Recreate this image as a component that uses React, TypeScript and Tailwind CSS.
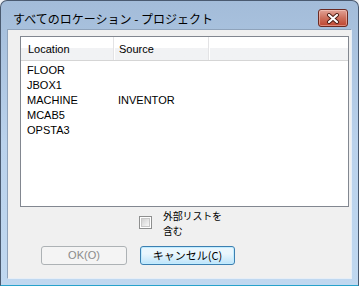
import React from "react";

const rows: [string, string][] = [
  ["FLOOR", ""],
  ["JBOX1", ""],
  ["MACHINE", "INVENTOR"],
  ["MCAB5", ""],
  ["OPSTA3", ""],
];

const ui = { fontFamily: '"Liberation Sans", "Noto Sans CJK JP", sans-serif' };
const jp = { fontFamily: '"Noto Sans CJK JP", "Liberation Sans", sans-serif' };

export default function App() {
  return (
    <div className="w-[359px] h-[286px] bg-[#eef1f5] overflow-hidden">
      <div className="w-[359px] h-[286px] flex flex-col rounded-t-[7px] border border-[#4a5a70] border-b-[#27a2cb] bg-gradient-to-b from-[#a3bcd9] via-[#bad2ec] to-[#c0d8f0]">
        {/* title bar */}
        <div className="h-[28px] flex justify-between shrink-0">
          <div className="pl-[12px] pt-[12px] text-[12px] leading-[12px] text-black whitespace-nowrap" style={jp}>
            すべてのロケーション - プロジェクト
          </div>
          <div className="mt-[8px] mr-[10px] w-[30px] h-[18px] rounded-[3px] border border-[#6b2a22] bg-gradient-to-b from-[#e2a397] via-[#cc6f5c] to-[#bf4530] flex items-center justify-center shadow-[inset_0_0_0_1px_rgba(255,220,210,0.45)]">
            <svg width="14" height="11" viewBox="0 0 14 11">
              <path d="M3 2 L11 9 M11 2 L3 9" stroke="#4a1a12" strokeWidth="4" strokeLinecap="round" />
              <path d="M3 2 L11 9 M11 2 L3 9" stroke="#ffffff" strokeWidth="2.2" strokeLinecap="round" />
            </svg>
          </div>
        </div>
        {/* client area */}
        <div className="mx-[6px] h-[250px] border border-[#8fa3bb] border-r-[#e6eef7] border-b-[#e6eef7] bg-[#f0f0f0] flex flex-col" style={ui}>
          {/* list */}
          <div className="ml-[12px] mt-[6px] w-[329px] h-[171px] border border-[#828790] bg-white flex flex-col">
            <div className="h-[24px] flex border-b border-[#d5d5d5] bg-gradient-to-b from-white from-50% to-[#f1f2f4] to-50% text-[11px] text-black">
              <div className="w-[92px] pl-[7px] pt-[2px] flex items-center">Location</div>
              <div className="w-[1px] bg-[#e3e3e5]" />
              <div className="w-[1px] bg-white" />
              <div className="w-[93px] pl-[4px] pt-[2px] flex items-center">Source</div>
              <div className="w-[1px] bg-[#e3e3e5]" />
              <div className="w-[1px] bg-white" />
              <div className="flex-1" />
            </div>
            <div className="pt-[2px] text-[11px] text-black">
              {rows.map(([a, b]) => (
                <div key={a} className="h-[15px] leading-[15px] flex">
                  <div className="w-[92px] pl-[6px]">{a}</div>
                  <div className="pl-[5px]">{b}</div>
                </div>
              ))}
            </div>
          </div>
          {/* checkbox */}
          <div className="mt-[2px] ml-[131px] flex items-start">
            <div className="mt-[7px] w-[13px] h-[13px] border border-[#8e8f8f] bg-white p-[1px]">
              <div className="w-full h-full bg-gradient-to-br from-[#d2d2d2] to-[#f8f8f8] border border-[#c8c8c8]" />
            </div>
            <div className="ml-[11px] text-[10px] leading-[14.5px] tracking-[-0.2px] text-black" style={jp}>
              <div>外部リストを</div>
              <div>含む</div>
            </div>
          </div>
          {/* buttons */}
          <div className="mt-[8px] ml-[33px] flex gap-[13px]">
            <div className="w-[86px] h-[19px] rounded-[3px] border border-[#adb2b5] bg-[#f4f4f4] flex items-center justify-center text-[11px] text-[#8a8a8a]">
              OK(O)
            </div>
            <div className="w-[95px] h-[19px] rounded-[3px] border border-[#3c7fb1] bg-gradient-to-b from-[#eaf6fd] from-40% to-[#bde4fa] shadow-[inset_0_0_0_1px_#c0ecff] flex items-center justify-center text-[11px] text-black" style={jp}>
              キャンセル(C)
            </div>
          </div>
        </div>
      </div>
    </div>
  );
}
